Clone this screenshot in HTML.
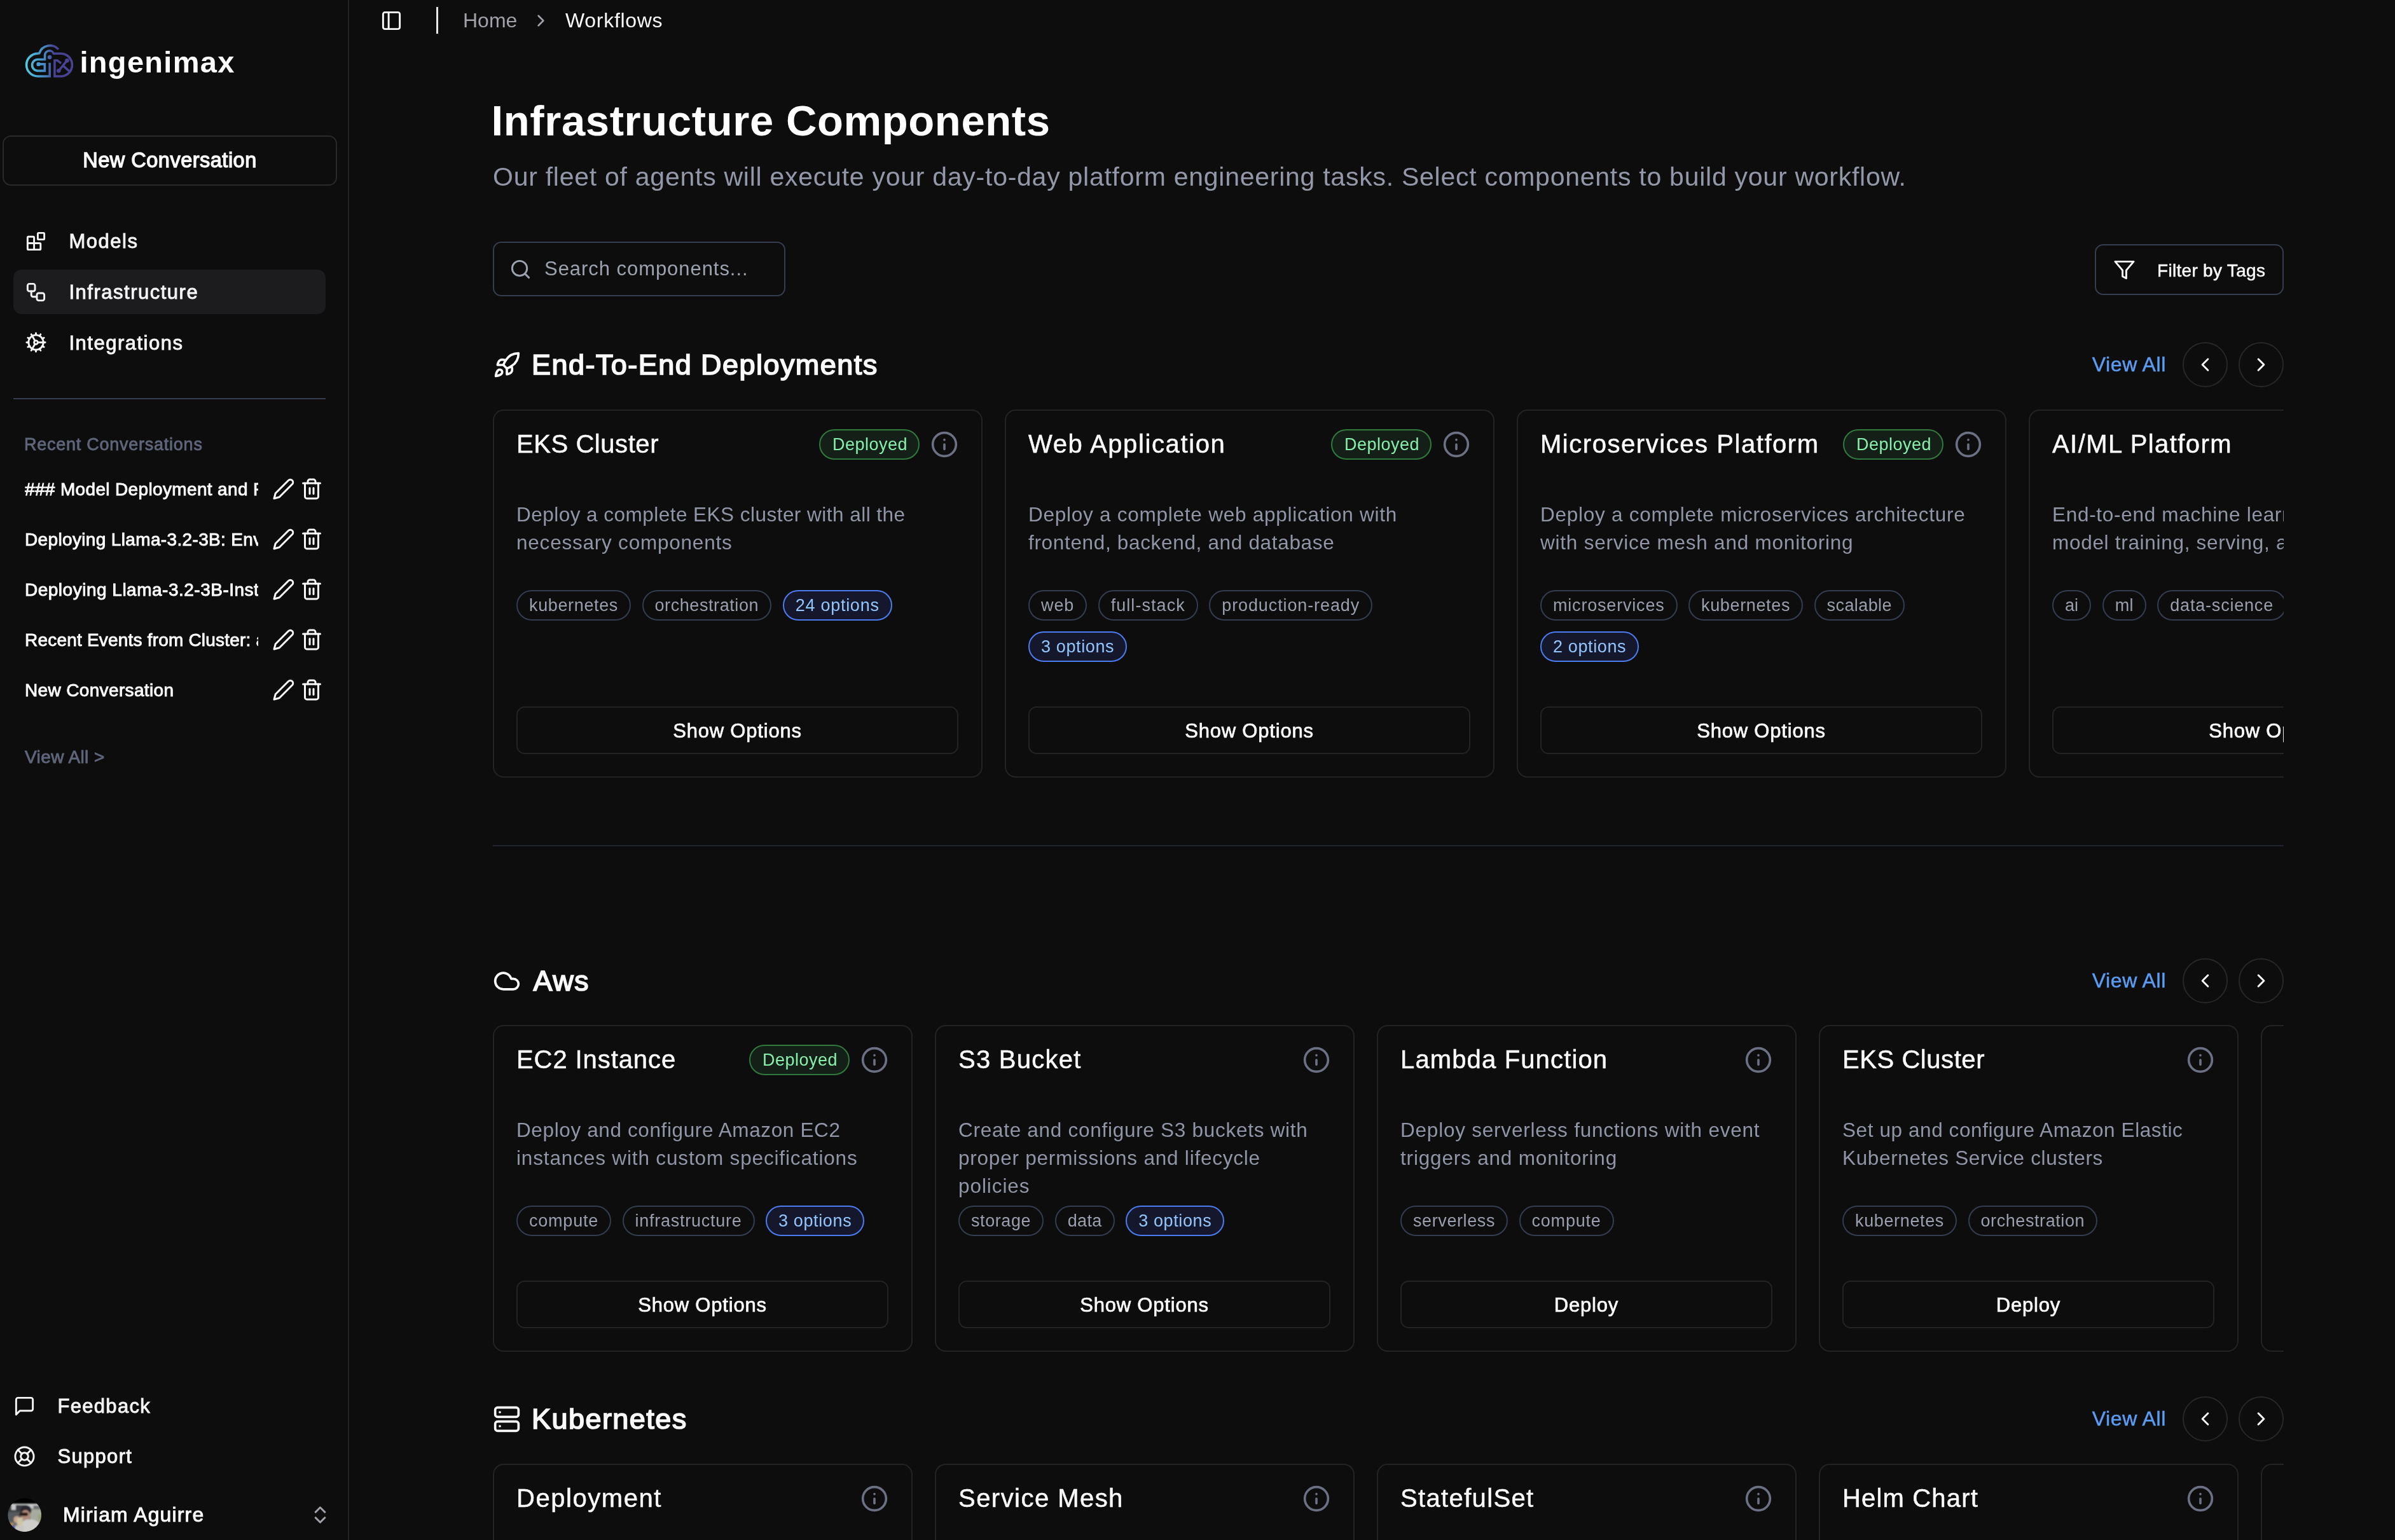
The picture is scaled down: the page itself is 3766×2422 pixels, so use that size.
<!DOCTYPE html>
<html lang="en"><head><meta charset="utf-8"><title>Infrastructure Components</title>
<style>
*{box-sizing:border-box;margin:0;padding:0}
html,body{width:3766px;height:2422px;overflow:hidden;background:#0d0d0d}
body{font-family:"Liberation Sans",sans-serif;color:#fafafa;position:relative;-webkit-font-smoothing:antialiased}
.ic{display:block;flex:none}
#wrap{position:absolute;left:0;top:0;width:3766px;height:2422px;will-change:transform}
#side{position:absolute;left:0;top:0;width:549px;height:2422px;border-right:2px solid #232326}
.logow{position:absolute;left:30px;top:60px;height:70px;width:400px}
.logo{display:block}
.logot{position:absolute;left:95.5px;top:6px;font-weight:700;font-size:47px;letter-spacing:1.3px;color:#fff;white-space:nowrap;line-height:64px}
.newc{position:absolute;left:4px;top:213px;width:526px;height:79px;border:2px solid #29292c;border-radius:13px;display:flex;align-items:center;justify-content:center;font-size:32.5px;font-weight:400;letter-spacing:0.5px;-webkit-text-stroke:1.3px #fafafa;color:#fafafa}
.nav{position:absolute;left:21px;width:491px;height:70px;border-radius:13px;display:flex;align-items:center;font-size:31px;letter-spacing:1.5px;color:#f4f4f5;-webkit-text-stroke:0.9px #f4f4f5}
.nav.act{background:#1c1c1f}
.nav .ni{margin-left:18px}
.nav span{position:absolute;left:87.5px;margin-top:2px}
.sdiv{position:absolute;left:21px;top:626px;width:491px;height:2px;background:#353d4e}
.rc{position:absolute;left:38px;top:680px;font-size:27px;line-height:38px;color:#5f667a;font-weight:400;-webkit-text-stroke:0.8px #5f667a;letter-spacing:0.75px;white-space:nowrap}
.cv{position:absolute;left:39px;width:480px;height:80px;display:flex;align-items:center}
.cvt{display:block;margin-top:3px;width:367px;overflow:hidden;white-space:nowrap;font-size:28px;font-weight:400;-webkit-text-stroke:0.9px #fafafa;letter-spacing:0.35px;color:#fafafa}
.cv .pe{position:absolute;left:389px}
.cv .tr{position:absolute;left:433px}
.sva{position:absolute;left:39px;top:1171px;font-size:28px;line-height:40px;font-weight:400;-webkit-text-stroke:0.9px #5f667a;letter-spacing:0.4px;color:#5f667a}
.foot{position:absolute;left:21px;width:491px;height:70px;display:flex;align-items:center;font-size:31px;letter-spacing:1.3px;color:#f4f4f5;-webkit-text-stroke:0.9px #f4f4f5}
.foot .fi{margin-left:0px}
.foot span{position:absolute;left:69.5px;margin-top:1px}
.user{position:absolute;left:11.5px;top:2347.5px;width:520px;height:70px;display:flex;align-items:center}
.av{display:block}
.un{position:absolute;left:87.5px;font-size:32px;letter-spacing:1.15px;color:#fafafa;-webkit-text-stroke:0.9px #fafafa;white-space:nowrap}
.ud{position:absolute;left:474px;color:#a1a1aa}
#top{position:absolute;left:548px;top:0;height:64px;width:3218px}
#top .tp{position:absolute;left:50px;top:15px;color:#fafafa}
#top .sep{position:absolute;left:137.5px;top:11px;width:3px;height:42px;background:#e8e8ea}
.bc1{position:absolute;left:180px;top:12px;font-size:32px;line-height:40px;color:#a1a1aa}
.bcc{position:absolute;left:287px;top:17px;color:#a1a1aa}
.bc2{position:absolute;left:341px;top:12px;font-size:32px;letter-spacing:0.7px;line-height:40px;color:#fafafa}
#main{position:absolute;left:775px;top:0;width:2816px;height:2422px}
.h1{position:absolute;left:-2.5px;top:150px;font-size:67px;line-height:80px;font-weight:700;color:#fff;white-space:nowrap;letter-spacing:0.62px}
.sub{position:absolute;left:0;top:252px;font-size:41px;letter-spacing:0.74px;line-height:52px;color:#9398a8;white-space:nowrap}
.search{position:absolute;left:0;top:380px;width:460px;height:86px;border:2px solid #353d4e;border-radius:13px;display:flex;align-items:center}
.search .si{margin-left:24px;color:#9ca3af}
.search .ph{margin-left:20px;font-size:31px;letter-spacing:0.95px;color:#9ca3af}
.filter{position:absolute;left:2519px;top:384px;width:297px;height:80px;border:2px solid #353d4e;border-radius:13px;display:flex;align-items:center;font-size:28px;color:#fafafa;-webkit-text-stroke:0.5px #fafafa}
.filter .fi2{margin-left:27px}
.filter span{margin-left:34px;margin-top:3px;letter-spacing:0.3px}
.sec{position:absolute;left:0;width:2816px}
.sh{height:71px;display:flex;align-items:center;justify-content:space-between}
.shl{display:flex;align-items:center}
.shi{color:#fafafa}
.sht{margin-left:17px;font-size:45px;font-weight:400;-webkit-text-stroke:1.7px #fafafa;letter-spacing:1.45px;color:#fafafa;white-space:nowrap}
.shr{display:flex;align-items:center}
.va{font-size:32px;letter-spacing:0.6px;color:#5b9df5;-webkit-text-stroke:0.5px #5b9df5;margin-right:26px}
.circ{width:71px;height:71px;border-radius:50%;border:2px solid #27272a;display:flex;align-items:center;justify-content:center;margin-left:17px;color:#fafafa}
.va + .circ{margin-left:0}
.row{margin-top:35px;display:flex;width:2816px;overflow:hidden;align-items:stretch}
.card{flex:none;border:2px solid #232326;border-radius:17px;padding:36px 36px 35px 35px;display:flex;flex-direction:column;background:#0d0d0d}
.r1 .card{width:770px;margin-right:35px;height:579px}
.r2 .card{width:660px;margin-right:35px;height:514px}
.ch{height:34px;display:flex;align-items:center;justify-content:space-between}
.ct{position:relative;top:-1px;font-size:40px;letter-spacing:1.1px;color:#fafafa;white-space:nowrap;-webkit-text-stroke:0.5px #fafafa}
.cr{display:flex;align-items:center}
.dep{height:48px;padding:0 17px 0 19px;border:2px solid #2f7a3c;background:#141f17;border-radius:24px;color:#86efac;font-size:27px;display:flex;align-items:center;margin-right:17px;letter-spacing:0.5px}
.info{color:#6b7183}
.cd{margin-top:71px;font-size:31.5px;letter-spacing:0.7px;line-height:44px;color:#9096a6;height:132px;white-space:nowrap;overflow:hidden}
.tags{margin-top:8.5px;display:flex;flex-wrap:wrap;gap:17px 17.5px}
.tag{height:48px;padding:2.5px 18px 0;border:2px solid #343d4f;border-radius:24px;font-size:27px;letter-spacing:0.6px;color:#9a9fae;display:flex;align-items:center;white-space:nowrap}
.tag.opt{border-color:#4b7df0;background:#15182c;color:#93c5fd}
.btn{margin-top:auto;height:75px;border:2px solid #232326;border-radius:13px;display:flex;align-items:center;justify-content:center;padding-top:3px;font-size:31px;letter-spacing:0.8px;color:#fafafa;-webkit-text-stroke:0.7px #fafafa}
.hr{position:absolute;left:0;top:1329px;width:2816px;height:2px;background:#20252f}
.ln{display:block}

</style></head><body>
<div id="wrap">
<div id="side">
 <div class="logow"><svg class="logo" width="100" height="70" viewBox="0 0 2200 1540" fill="none">
<defs><linearGradient id="lg" x1="230" y1="0" x2="1890" y2="0" gradientUnits="userSpaceOnUse"><stop offset="0" stop-color="#52cbe0"/><stop offset="0.22" stop-color="#49a6d0"/><stop offset="0.42" stop-color="#4580c2"/><stop offset="0.58" stop-color="#484392"/><stop offset="1" stop-color="#494195"/></linearGradient></defs>
<g stroke="url(#lg)" stroke-width="79" stroke-linejoin="miter" stroke-linecap="butt">
<path d="M1060 850 V1320 H660 A395 395 0 0 1 640 530 L700 522 A391 391 0 0 1 1362 388"/>
<path d="M670 900 H888 V1130 H650 A197 197 0 0 1 650 736 H892 V600 A158 158 0 0 1 1196 535 H1462 A393 393 0 0 1 1462 1320 H1230 V770 H1322 L1452 868"/>
<path d="M1660 775 L1370 1130"/><path d="M1522 955 L1748 1152"/>
</g>
<g fill="url(#lg)"><circle cx="1060" cy="660" r="72"/><circle cx="672" cy="900" r="70"/><circle cx="1660" cy="775" r="72"/><circle cx="1370" cy="1130" r="72"/></g>
</svg><span class="logot">ingenimax</span></div>
 <div class="newc"><span>New Conversation</span></div>
 <div class="nav" style="top:344px"><svg class="ic ni" width="35" height="35" viewBox="0 0 24 24" fill="none" stroke="currentColor" stroke-width="2" stroke-linecap="round" stroke-linejoin="round" style=""><rect width="7" height="7" x="14" y="3" rx="1"/><path d="M10 21V8a1 1 0 0 0-1-1H4a1 1 0 0 0-1 1v12a1 1 0 0 0 1 1h12a1 1 0 0 0 1-1v-5a1 1 0 0 0-1-1H3"/></svg><span>Models</span></div>
 <div class="nav act" style="top:424px"><svg class="ic ni" width="35" height="35" viewBox="0 0 24 24" fill="none" stroke="currentColor" stroke-width="2" stroke-linecap="round" stroke-linejoin="round" style=""><rect width="8" height="8" x="3" y="3" rx="2"/><path d="M7 11v4a2 2 0 0 0 2 2h4"/><rect width="8" height="8" x="13" y="13" rx="2"/></svg><span>Infrastructure</span></div>
 <div class="nav" style="top:503.5px"><svg class="ic ni" width="35" height="35" viewBox="0 0 24 24" fill="none" stroke="currentColor" stroke-width="2" stroke-linecap="round" stroke-linejoin="round" style=""><path d="M12 20a8 8 0 1 0 0-16 8 8 0 0 0 0 16Z"/><path d="M12 14a2 2 0 1 0 0-4 2 2 0 0 0 0 4Z"/><path d="M12 2v2"/><path d="M12 22v-2"/><path d="m17 20.66-1-1.73"/><path d="M11 10.27 7 3.34"/><path d="m20.66 17-1.73-1"/><path d="m3.34 7 1.73 1"/><path d="M14 12h8"/><path d="M2 12h2"/><path d="m20.66 7-1.73 1"/><path d="m3.34 17 1.73-1"/><path d="m17 3.34-1 1.73"/><path d="m11 13.73-4 6.93"/></svg><span>Integrations</span></div>
 <div class="sdiv"></div>
 <div class="rc">Recent Conversations</div>
 <div class="cv" style="top:728.5px"><span class="cvt" style="letter-spacing:0.35px">### Model Deployment and Performance</span><svg class="ic pe" width="36" height="36" viewBox="0 0 24 24" fill="none" stroke="currentColor" stroke-width="2" stroke-linecap="round" stroke-linejoin="round" style=""><path d="M17 3a2.828 2.828 0 1 1 4 4L7.5 20.5 2 22l1.5-5.5L17 3z"/></svg><svg class="ic tr" width="36" height="36" viewBox="0 0 24 24" fill="none" stroke="currentColor" stroke-width="2" stroke-linecap="round" stroke-linejoin="round" style=""><path d="M3 6h18"/><path d="M19 6v14c0 1-1 2-2 2H7c-1 0-2-1-2-2V6"/><path d="M8 6V4c0-1 1-2 2-2h4c1 0 2 1 2 2v2"/><line x1="10" x2="10" y1="11" y2="17"/><line x1="14" x2="14" y1="11" y2="17"/></svg></div><div class="cv" style="top:807.6px"><span class="cvt" style="letter-spacing:0.35px">Deploying Llama-3.2-3B: Environment</span><svg class="ic pe" width="36" height="36" viewBox="0 0 24 24" fill="none" stroke="currentColor" stroke-width="2" stroke-linecap="round" stroke-linejoin="round" style=""><path d="M17 3a2.828 2.828 0 1 1 4 4L7.5 20.5 2 22l1.5-5.5L17 3z"/></svg><svg class="ic tr" width="36" height="36" viewBox="0 0 24 24" fill="none" stroke="currentColor" stroke-width="2" stroke-linecap="round" stroke-linejoin="round" style=""><path d="M3 6h18"/><path d="M19 6v14c0 1-1 2-2 2H7c-1 0-2-1-2-2V6"/><path d="M8 6V4c0-1 1-2 2-2h4c1 0 2 1 2 2v2"/><line x1="10" x2="10" y1="11" y2="17"/><line x1="14" x2="14" y1="11" y2="17"/></svg></div><div class="cv" style="top:886.7px"><span class="cvt" style="letter-spacing:0.5px">Deploying Llama-3.2-3B-Instruct</span><svg class="ic pe" width="36" height="36" viewBox="0 0 24 24" fill="none" stroke="currentColor" stroke-width="2" stroke-linecap="round" stroke-linejoin="round" style=""><path d="M17 3a2.828 2.828 0 1 1 4 4L7.5 20.5 2 22l1.5-5.5L17 3z"/></svg><svg class="ic tr" width="36" height="36" viewBox="0 0 24 24" fill="none" stroke="currentColor" stroke-width="2" stroke-linecap="round" stroke-linejoin="round" style=""><path d="M3 6h18"/><path d="M19 6v14c0 1-1 2-2 2H7c-1 0-2-1-2-2V6"/><path d="M8 6V4c0-1 1-2 2-2h4c1 0 2 1 2 2v2"/><line x1="10" x2="10" y1="11" y2="17"/><line x1="14" x2="14" y1="11" y2="17"/></svg></div><div class="cv" style="top:965.8px"><span class="cvt" style="letter-spacing:0.2px">Recent Events from Cluster: aws-prod</span><svg class="ic pe" width="36" height="36" viewBox="0 0 24 24" fill="none" stroke="currentColor" stroke-width="2" stroke-linecap="round" stroke-linejoin="round" style=""><path d="M17 3a2.828 2.828 0 1 1 4 4L7.5 20.5 2 22l1.5-5.5L17 3z"/></svg><svg class="ic tr" width="36" height="36" viewBox="0 0 24 24" fill="none" stroke="currentColor" stroke-width="2" stroke-linecap="round" stroke-linejoin="round" style=""><path d="M3 6h18"/><path d="M19 6v14c0 1-1 2-2 2H7c-1 0-2-1-2-2V6"/><path d="M8 6V4c0-1 1-2 2-2h4c1 0 2 1 2 2v2"/><line x1="10" x2="10" y1="11" y2="17"/><line x1="14" x2="14" y1="11" y2="17"/></svg></div><div class="cv" style="top:1044.9px"><span class="cvt" style="letter-spacing:0.35px">New Conversation</span><svg class="ic pe" width="36" height="36" viewBox="0 0 24 24" fill="none" stroke="currentColor" stroke-width="2" stroke-linecap="round" stroke-linejoin="round" style=""><path d="M17 3a2.828 2.828 0 1 1 4 4L7.5 20.5 2 22l1.5-5.5L17 3z"/></svg><svg class="ic tr" width="36" height="36" viewBox="0 0 24 24" fill="none" stroke="currentColor" stroke-width="2" stroke-linecap="round" stroke-linejoin="round" style=""><path d="M3 6h18"/><path d="M19 6v14c0 1-1 2-2 2H7c-1 0-2-1-2-2V6"/><path d="M8 6V4c0-1 1-2 2-2h4c1 0 2 1 2 2v2"/><line x1="10" x2="10" y1="11" y2="17"/><line x1="14" x2="14" y1="11" y2="17"/></svg></div>
 <div class="sva">View All &gt;</div>
 <div class="foot" style="top:2176px"><svg class="ic fi" width="35" height="35" viewBox="0 0 24 24" fill="none" stroke="currentColor" stroke-width="2" stroke-linecap="round" stroke-linejoin="round" style=""><path d="M21 15a2 2 0 0 1-2 2H7l-4 4V5a2 2 0 0 1 2-2h14a2 2 0 0 1 2 2z"/></svg><span>Feedback</span></div>
 <div class="foot" style="top:2255px"><svg class="ic fi" width="35" height="35" viewBox="0 0 24 24" fill="none" stroke="currentColor" stroke-width="2" stroke-linecap="round" stroke-linejoin="round" style=""><circle cx="12" cy="12" r="10"/><path d="m4.93 4.93 4.24 4.24"/><path d="m14.83 9.17 4.24-4.24"/><path d="m14.83 14.83 4.24 4.24"/><path d="m9.17 14.83-4.24 4.24"/><circle cx="12" cy="12" r="4"/></svg><span>Support</span></div>
 <div class="user"><svg class="av" width="53.4" height="53.4" viewBox="0 0 54 54"><defs><clipPath id="avc"><circle cx="27" cy="27" r="26.7"/></clipPath><filter id="avb" x="-10%" y="-10%" width="120%" height="120%"><feGaussianBlur stdDeviation="0.9"/></filter></defs><g clip-path="url(#avc)"><rect width="54" height="54" fill="#000"/><g filter="url(#avb)"><rect x="-2" y="9" width="58" height="47" fill="#6e726f"/><rect x="-2" y="9" width="58" height="3" fill="#c9cccb"/><rect x="0" y="11" width="30" height="14" fill="#3b3e42"/><rect x="6" y="10" width="7" height="9" fill="#c5c8c6"/><rect x="32" y="11" width="9" height="6" fill="#c2c5c4"/><rect x="0" y="22" width="20" height="16" fill="#55585c"/><rect x="36" y="18" width="20" height="24" fill="#a7ab9f"/><rect x="49" y="26" width="7" height="14" fill="#9aa275"/><rect x="2" y="40" width="8" height="8" fill="#7c8a52"/><ellipse cx="29" cy="19.5" rx="9" ry="8" fill="#2b2731"/><ellipse cx="28.5" cy="28" rx="7.5" ry="9" fill="#b08b79"/><rect x="18.5" y="23" width="14" height="5.5" rx="2.5" fill="#2c1f18"/><ellipse cx="35" cy="52" rx="21" ry="18" fill="#cfcdca"/><ellipse cx="14.5" cy="34" rx="5" ry="5.5" fill="#c9a48e"/><rect x="15" y="31" width="9" height="13" rx="2" fill="#cdc5a6"/><rect x="6" y="42" width="5" height="7" fill="#3f5fb0"/><rect x="5" y="40" width="4" height="4" fill="#c98a3a"/><rect x="12" y="44" width="14" height="12" fill="#c8c6c2"/></g></g></svg><span class="un">Miriam Aguirre</span><svg class="ic ud" width="35" height="35" viewBox="0 0 24 24" fill="none" stroke="currentColor" stroke-width="2" stroke-linecap="round" stroke-linejoin="round" style=""><path d="m7 15 5 5 5-5"/><path d="m7 9 5-5 5 5"/></svg></div>
</div>
<div id="top"><svg class="ic tp" width="35" height="35" viewBox="0 0 24 24" fill="none" stroke="currentColor" stroke-width="2" stroke-linecap="round" stroke-linejoin="round" style=""><rect width="18" height="18" x="3" y="3" rx="2"/><path d="M9 3v18"/></svg><span class="sep"></span><span class="bc1">Home</span><svg class="ic bcc" width="31" height="31" viewBox="0 0 24 24" fill="none" stroke="currentColor" stroke-width="2" stroke-linecap="round" stroke-linejoin="round" style=""><path d="m9 18 6-6-6-6"/></svg><span class="bc2">Workflows</span></div>
<div id="main">
 <h1 class="h1">Infrastructure Components</h1>
 <p class="sub">Our fleet of agents will execute your day-to-day platform engineering tasks. Select components to build your workflow.</p>
 <div class="search"><svg class="ic si" width="35" height="35" viewBox="0 0 24 24" fill="none" stroke="currentColor" stroke-width="2" stroke-linecap="round" stroke-linejoin="round" style=""><circle cx="11" cy="11" r="8"/><path d="m21 21-4.3-4.3"/></svg><span class="ph">Search components...</span></div>
 <div class="filter"><svg class="ic fi2" width="35" height="35" viewBox="0 0 24 24" fill="none" stroke="currentColor" stroke-width="2" stroke-linecap="round" stroke-linejoin="round" style=""><polygon points="22 3 2 3 10 12.46 10 19 14 21 14 12.46 22 3"/></svg><span>Filter by Tags</span></div>
 <div class="sec" style="top:538px"><div class="sh"><div class="shl"><svg class="ic shi" width="44" height="44" viewBox="0 0 24 24" fill="none" stroke="currentColor" stroke-width="2" stroke-linecap="round" stroke-linejoin="round" style=""><path d="M4.5 16.5c-1.5 1.26-2 5-2 5s3.74-.5 5-2c.71-.84.7-2.13-.09-2.91a2.18 2.18 0 0 0-2.91-.09z"/><path d="m12 15-3-3a22 22 0 0 1 2-3.95A12.88 12.88 0 0 1 22 2c0 2.72-.78 7.5-6 11a22.35 22.35 0 0 1-4 2z"/><path d="M9 12H4s.55-3.03 2-4c1.62-1.08 5 0 5 0"/><path d="M12 15v5s3.03-.55 4-2c1.08-1.62 0-5 0-5"/></svg><span class="sht">End-To-End Deployments</span></div><div class="shr"><span class="va">View All</span><span class="circ"><svg class="ic " width="35" height="35" viewBox="0 0 24 24" fill="none" stroke="currentColor" stroke-width="2" stroke-linecap="round" stroke-linejoin="round" style=""><path d="m15 18-6-6 6-6"/></svg></span><span class="circ"><svg class="ic " width="35" height="35" viewBox="0 0 24 24" fill="none" stroke="currentColor" stroke-width="2" stroke-linecap="round" stroke-linejoin="round" style=""><path d="m9 18 6-6-6-6"/></svg></span></div></div><div class="row r1" style="margin-top:35px"><div class="card "><div class="ch"><div class="ct" style="letter-spacing:0.56px">EKS Cluster</div><div class="cr"><span class="dep">Deployed</span><svg class="ic info" width="44" height="44" viewBox="0 0 24 24" fill="none" stroke="currentColor" stroke-width="2" stroke-linecap="round" stroke-linejoin="round" style=""><circle cx="12" cy="12" r="10"/><path d="M12 16v-4"/><path d="M12 8h.01"/></svg></div></div><div class="cd"><span class="ln" style="letter-spacing:0.47px">Deploy a complete EKS cluster with all the</span><span class="ln" style="letter-spacing:0.78px">necessary components</span></div><div class="tags"><span class="tag" style="letter-spacing:0.64px">kubernetes</span><span class="tag" style="letter-spacing:0.58px">orchestration</span><span class="tag opt" style="letter-spacing:0.74px">24 options</span></div><div class="btn">Show Options</div></div><div class="card "><div class="ch"><div class="ct" style="letter-spacing:1.62px">Web Application</div><div class="cr"><span class="dep">Deployed</span><svg class="ic info" width="44" height="44" viewBox="0 0 24 24" fill="none" stroke="currentColor" stroke-width="2" stroke-linecap="round" stroke-linejoin="round" style=""><circle cx="12" cy="12" r="10"/><path d="M12 16v-4"/><path d="M12 8h.01"/></svg></div></div><div class="cd"><span class="ln" style="letter-spacing:0.75px">Deploy a complete web application with</span><span class="ln" style="letter-spacing:0.67px">frontend, backend, and database</span></div><div class="tags"><span class="tag" style="letter-spacing:0.89px">web</span><span class="tag" style="letter-spacing:1.05px">full-stack</span><span class="tag" style="letter-spacing:0.89px">production-ready</span><span class="tag opt" style="letter-spacing:0.62px">3 options</span></div><div class="btn">Show Options</div></div><div class="card "><div class="ch"><div class="ct" style="letter-spacing:1.55px">Microservices Platform</div><div class="cr"><span class="dep">Deployed</span><svg class="ic info" width="44" height="44" viewBox="0 0 24 24" fill="none" stroke="currentColor" stroke-width="2" stroke-linecap="round" stroke-linejoin="round" style=""><circle cx="12" cy="12" r="10"/><path d="M12 16v-4"/><path d="M12 8h.01"/></svg></div></div><div class="cd"><span class="ln" style="letter-spacing:0.75px">Deploy a complete microservices architecture</span><span class="ln" style="letter-spacing:0.78px">with service mesh and monitoring</span></div><div class="tags"><span class="tag" style="letter-spacing:0.81px">microservices</span><span class="tag" style="letter-spacing:0.64px">kubernetes</span><span class="tag" style="letter-spacing:0.41px">scalable</span><span class="tag opt" style="letter-spacing:0.63px">2 options</span></div><div class="btn">Show Options</div></div><div class="card "><div class="ch"><div class="ct" style="letter-spacing:1.43px">AI/ML Platform</div><div class="cr"><svg class="ic info" width="44" height="44" viewBox="0 0 24 24" fill="none" stroke="currentColor" stroke-width="2" stroke-linecap="round" stroke-linejoin="round" style=""><circle cx="12" cy="12" r="10"/><path d="M12 16v-4"/><path d="M12 8h.01"/></svg></div></div><div class="cd"><span class="ln">End-to-end machine learning platform with</span><span class="ln">model training, serving, and monitoring</span></div><div class="tags"><span class="tag" style="letter-spacing:0.09px">ai</span><span class="tag" style="letter-spacing:0.30px">ml</span><span class="tag" style="letter-spacing:0.80px">data-science</span><span class="tag">mlops</span></div><div class="btn">Show Options</div></div></div></div>
 <div class="hr"></div>
 <div class="sec" style="top:1507px"><div class="sh"><div class="shl"><svg class="ic shi" width="44" height="44" viewBox="0 0 24 24" fill="none" stroke="currentColor" stroke-width="2" stroke-linecap="round" stroke-linejoin="round" style=""><path d="M17.5 19H9a7 7 0 1 1 6.71-9h1.79a4.5 4.5 0 1 1 0 9Z"/></svg><span class="sht" style="margin-left:19.5px">Aws</span></div><div class="shr"><span class="va">View All</span><span class="circ"><svg class="ic " width="35" height="35" viewBox="0 0 24 24" fill="none" stroke="currentColor" stroke-width="2" stroke-linecap="round" stroke-linejoin="round" style=""><path d="m15 18-6-6 6-6"/></svg></span><span class="circ"><svg class="ic " width="35" height="35" viewBox="0 0 24 24" fill="none" stroke="currentColor" stroke-width="2" stroke-linecap="round" stroke-linejoin="round" style=""><path d="m9 18 6-6-6-6"/></svg></span></div></div><div class="row r2" style="margin-top:34px"><div class="card "><div class="ch"><div class="ct" style="letter-spacing:0.91px">EC2 Instance</div><div class="cr"><span class="dep">Deployed</span><svg class="ic info" width="44" height="44" viewBox="0 0 24 24" fill="none" stroke="currentColor" stroke-width="2" stroke-linecap="round" stroke-linejoin="round" style=""><circle cx="12" cy="12" r="10"/><path d="M12 16v-4"/><path d="M12 8h.01"/></svg></div></div><div class="cd"><span class="ln" style="letter-spacing:0.62px">Deploy and configure Amazon EC2</span><span class="ln" style="letter-spacing:0.85px">instances with custom specifications</span></div><div class="tags"><span class="tag" style="letter-spacing:0.78px">compute</span><span class="tag" style="letter-spacing:0.75px">infrastructure</span><span class="tag opt" style="letter-spacing:0.62px">3 options</span></div><div class="btn">Show Options</div></div><div class="card "><div class="ch"><div class="ct" style="letter-spacing:1.25px">S3 Bucket</div><div class="cr"><svg class="ic info" width="44" height="44" viewBox="0 0 24 24" fill="none" stroke="currentColor" stroke-width="2" stroke-linecap="round" stroke-linejoin="round" style=""><circle cx="12" cy="12" r="10"/><path d="M12 16v-4"/><path d="M12 8h.01"/></svg></div></div><div class="cd"><span class="ln" style="letter-spacing:0.72px">Create and configure S3 buckets with</span><span class="ln" style="letter-spacing:0.78px">proper permissions and lifecycle</span><span class="ln" style="letter-spacing:0.93px">policies</span></div><div class="tags"><span class="tag" style="letter-spacing:0.58px">storage</span><span class="tag" style="letter-spacing:0.38px">data</span><span class="tag opt" style="letter-spacing:0.62px">3 options</span></div><div class="btn">Show Options</div></div><div class="card "><div class="ch"><div class="ct" style="letter-spacing:1.14px">Lambda Function</div><div class="cr"><svg class="ic info" width="44" height="44" viewBox="0 0 24 24" fill="none" stroke="currentColor" stroke-width="2" stroke-linecap="round" stroke-linejoin="round" style=""><circle cx="12" cy="12" r="10"/><path d="M12 16v-4"/><path d="M12 8h.01"/></svg></div></div><div class="cd"><span class="ln" style="letter-spacing:0.78px">Deploy serverless functions with event</span><span class="ln" style="letter-spacing:0.82px">triggers and monitoring</span></div><div class="tags"><span class="tag" style="letter-spacing:0.60px">serverless</span><span class="tag" style="letter-spacing:0.78px">compute</span></div><div class="btn">Deploy</div></div><div class="card "><div class="ch"><div class="ct" style="letter-spacing:0.56px">EKS Cluster</div><div class="cr"><svg class="ic info" width="44" height="44" viewBox="0 0 24 24" fill="none" stroke="currentColor" stroke-width="2" stroke-linecap="round" stroke-linejoin="round" style=""><circle cx="12" cy="12" r="10"/><path d="M12 16v-4"/><path d="M12 8h.01"/></svg></div></div><div class="cd"><span class="ln" style="letter-spacing:0.59px">Set up and configure Amazon Elastic</span><span class="ln" style="letter-spacing:0.66px">Kubernetes Service clusters</span></div><div class="tags"><span class="tag" style="letter-spacing:0.64px">kubernetes</span><span class="tag" style="letter-spacing:0.58px">orchestration</span></div><div class="btn">Deploy</div></div><div class="card "><div class="ch"><div class="ct">RDS Database</div><div class="cr"><svg class="ic info" width="44" height="44" viewBox="0 0 24 24" fill="none" stroke="currentColor" stroke-width="2" stroke-linecap="round" stroke-linejoin="round" style=""><circle cx="12" cy="12" r="10"/><path d="M12 16v-4"/><path d="M12 8h.01"/></svg></div></div><div class="cd"><span class="ln">Provision managed relational databases</span></div><div class="tags"><span class="tag">database</span></div><div class="btn">Deploy</div></div></div></div>
 <div class="sec" style="top:2196px"><div class="sh"><div class="shl"><svg class="ic shi" width="44" height="44" viewBox="0 0 24 24" fill="none" stroke="currentColor" stroke-width="2" stroke-linecap="round" stroke-linejoin="round" style=""><rect width="20" height="8" x="2" y="2" rx="2" ry="2"/><rect width="20" height="8" x="2" y="14" rx="2" ry="2"/><line x1="6" x2="6.01" y1="6" y2="6"/><line x1="6" x2="6.01" y1="18" y2="18"/></svg><span class="sht">Kubernetes</span></div><div class="shr"><span class="va">View All</span><span class="circ"><svg class="ic " width="35" height="35" viewBox="0 0 24 24" fill="none" stroke="currentColor" stroke-width="2" stroke-linecap="round" stroke-linejoin="round" style=""><path d="m15 18-6-6 6-6"/></svg></span><span class="circ"><svg class="ic " width="35" height="35" viewBox="0 0 24 24" fill="none" stroke="currentColor" stroke-width="2" stroke-linecap="round" stroke-linejoin="round" style=""><path d="m9 18 6-6-6-6"/></svg></span></div></div><div class="row r2" style="margin-top:35px"><div class="card "><div class="ch"><div class="ct" style="letter-spacing:1.56px">Deployment</div><div class="cr"><svg class="ic info" width="44" height="44" viewBox="0 0 24 24" fill="none" stroke="currentColor" stroke-width="2" stroke-linecap="round" stroke-linejoin="round" style=""><circle cx="12" cy="12" r="10"/><path d="M12 16v-4"/><path d="M12 8h.01"/></svg></div></div><div class="cd"><span class="ln">Deploy containerized applications to</span><span class="ln">Kubernetes clusters</span></div><div class="tags"><span class="tag">containers</span></div><div class="btn">Deploy</div></div><div class="card "><div class="ch"><div class="ct" style="letter-spacing:1.46px">Service Mesh</div><div class="cr"><svg class="ic info" width="44" height="44" viewBox="0 0 24 24" fill="none" stroke="currentColor" stroke-width="2" stroke-linecap="round" stroke-linejoin="round" style=""><circle cx="12" cy="12" r="10"/><path d="M12 16v-4"/><path d="M12 8h.01"/></svg></div></div><div class="cd"><span class="ln">Configure service mesh for traffic</span><span class="ln">management</span></div><div class="tags"><span class="tag">networking</span></div><div class="btn">Deploy</div></div><div class="card "><div class="ch"><div class="ct" style="letter-spacing:1.35px">StatefulSet</div><div class="cr"><svg class="ic info" width="44" height="44" viewBox="0 0 24 24" fill="none" stroke="currentColor" stroke-width="2" stroke-linecap="round" stroke-linejoin="round" style=""><circle cx="12" cy="12" r="10"/><path d="M12 16v-4"/><path d="M12 8h.01"/></svg></div></div><div class="cd"><span class="ln">Manage stateful applications</span></div><div class="tags"><span class="tag" style="letter-spacing:0.58px">storage</span></div><div class="btn">Deploy</div></div><div class="card "><div class="ch"><div class="ct" style="letter-spacing:1.17px">Helm Chart</div><div class="cr"><svg class="ic info" width="44" height="44" viewBox="0 0 24 24" fill="none" stroke="currentColor" stroke-width="2" stroke-linecap="round" stroke-linejoin="round" style=""><circle cx="12" cy="12" r="10"/><path d="M12 16v-4"/><path d="M12 8h.01"/></svg></div></div><div class="cd"><span class="ln">Install and manage Helm charts</span></div><div class="tags"><span class="tag">packaging</span></div><div class="btn">Deploy</div></div><div class="card "><div class="ch"><div class="ct">Ingress</div><div class="cr"><svg class="ic info" width="44" height="44" viewBox="0 0 24 24" fill="none" stroke="currentColor" stroke-width="2" stroke-linecap="round" stroke-linejoin="round" style=""><circle cx="12" cy="12" r="10"/><path d="M12 16v-4"/><path d="M12 8h.01"/></svg></div></div><div class="cd"><span class="ln">Configure ingress</span></div><div class="tags"><span class="tag">networking</span></div><div class="btn">Deploy</div></div></div></div>
</div>
</div>
</body></html>
